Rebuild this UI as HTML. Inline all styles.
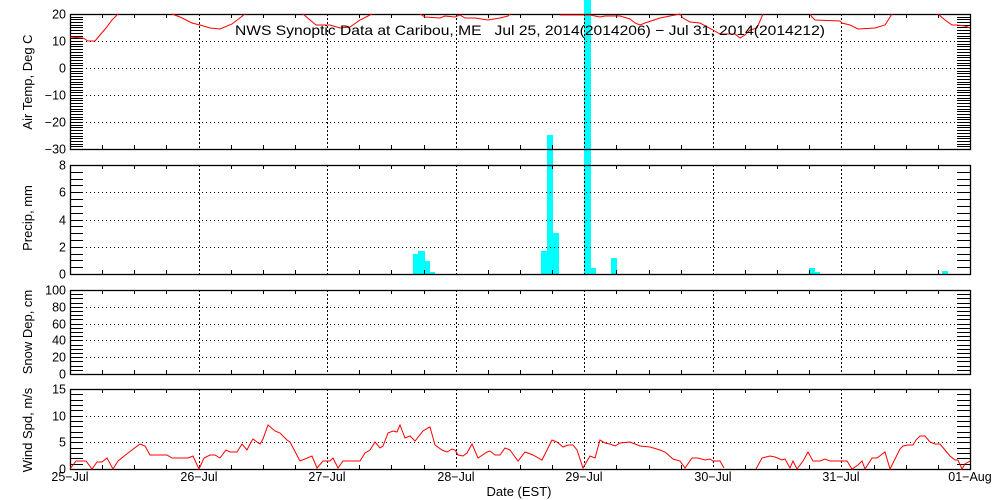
<!DOCTYPE html>
<html><head><meta charset="utf-8"><style>
html,body{margin:0;padding:0;background:#fff;}
svg{display:block;font-family:"Liberation Sans",sans-serif;}
</style></head><body>
<svg id="s" width="1000" height="500" viewBox="0 0 1000 500" xmlns="http://www.w3.org/2000/svg">
<rect width="1000" height="500" fill="#fff"/>
<g id="bars" fill="#00ffff">
<rect x="413" y="254" width="5" height="20"/>
<rect x="418" y="251" width="7" height="23"/>
<rect x="425" y="261" width="5" height="13"/>
<rect x="430" y="272" width="5" height="2"/>
<rect x="541" y="251" width="6" height="23"/>
<rect x="547" y="135" width="6" height="139"/>
<rect x="553" y="233" width="6" height="41"/>
<rect x="584" y="0" width="7" height="274"/>
<rect x="591" y="268" width="5" height="6"/>
<rect x="611" y="258" width="6" height="16"/>
<rect x="809" y="268" width="6" height="6"/>
<rect x="815" y="272" width="5" height="2"/>
<rect x="942" y="271" width="6" height="3"/>
</g>
<g id="g"></g>
<text x="235" y="35" font-size="14" fill="#000" style="white-space:pre" xml:space="preserve" textLength="590" lengthAdjust="spacingAndGlyphs">NWS Synoptic Data at Caribou, ME&#160;&#160;&#160;Jul 25, 2014(2014206) &#8722; Jul 31, 2014(2014212)</text>
<g font-size="13" fill="#000" text-anchor="middle">
<text transform="translate(32,82) rotate(-90)">Air Temp, Deg C</text>
<text transform="translate(32,218) rotate(-90)">Precip, mm</text>
<text transform="translate(32,332) rotate(-90)">Snow Dep, cm</text>
<text transform="translate(32,430) rotate(-90)">Wind Spd, m/s</text>
<text x="519" y="496">Date (EST)</text>
</g>
</svg>
<script>
var g=document.getElementById('g'),h='';
function L(x1,y1,x2,y2,ex){h+='<line x1="'+x1+'" y1="'+y1+'" x2="'+x2+'" y2="'+y2+'" stroke="#000" stroke-width="1" '+(ex||'')+'/>';}
function T(x,y,t,a){h+='<text x="'+x+'" y="'+y+'" font-size="12.5" text-anchor="'+(a||'end')+'">'+t+'</text>';}
var X0=70,X1=970,D=900/7;
var panels=[
 {t:14,b:149,min:-30,max:20,minor:1,major:10},
 {t:165,b:274,min:0,max:8,minor:0.5,major:2},
 {t:290,b:374,min:0,max:100,minor:5,major:20},
 {t:389,b:469,min:0,max:15,minor:1,major:5}
];
panels.forEach(function(p){
 var sc=(p.b-p.t)/(p.max-p.min);
 for(var v=p.min;v<=p.max+1e-6;v+=p.minor){
  var y=Math.round(p.b-(v-p.min)*sc)+0.5;
  L(X0,y,X0+13,y);L(X1-13,y,X1,y);
 }
 for(var v=p.min;v<=p.max+1e-6;v+=p.major){
  var y=Math.round(p.b-(v-p.min)*sc)+0.5;
  if(v>p.min&&v<p.max) L(X0,y,X1,y,'stroke-dasharray="1 3"');
  T(66,y+4,String(v).replace('-','\u2212'));
 }
 for(var i=1;i<28;i++){var x=Math.round(X0+i*D/4)+0.5;
  if(i%4==0) L(x,p.t,x,p.b,'stroke-dasharray="2 2"');
  else {L(x,p.t,x,p.t+4);L(x,p.b-4,x,p.b);}
 }
 h+='<rect x="70.5" y="'+(p.t+0.5)+'" width="900" height="'+(p.b-p.t)+'" fill="none" stroke="#000" stroke-width="1.3"/>';
});
var days=['25-Jul','26-Jul','27-Jul','28-Jul','29-Jul','30-Jul','31-Jul','01-Aug'];
days.forEach(function(d,i){T(Math.round(X0+i*D),481,d.replace('-','\u2212'),'middle');});
var temps=[
 [[70,37],[83,38],[88,41],[95,41],[100,35],[106,28],[112,20],[118,14]],
 [[172,14],[180,17],[192,23],[200,25],[210,28],[220,29],[232,24],[245,14]],
 [[303,14],[310,20],[316,25],[330,25],[340,28],[350,27],[360,20],[372,14]],
 [[420,14],[425,17],[440,18],[445,16],[455,17],[460,15],[465,18],[475,18],[488,20],[500,18],[508,16],[510,14]],
 [[560,15],[583,15],[590,15],[600,17],[605,16],[620,16],[630,19],[635,23],[640,25],[645,23],[660,18],[670,16],[680,14]],
 [[680,14],[683,18],[690,22],[700,23],[713,30],[720,34],[735,34],[740,38],[745,35],[750,30],[757,28],[763,14]],
 [[810,14],[812,17],[815,20],[840,21],[842,23],[850,25],[858,29],[875,28],[885,25],[892,14]],
 [[938,14],[945,20],[952,25],[957,25],[965,26],[970,28]]
];
temps.forEach(function(s){h+='<polyline fill="none" stroke="#f00" stroke-width="1" points="'+s.join(' ')+'"/>';});
var w=[[70,469],[76,461],[86,461],[92,469],[97,462],[102,462],[107,458],[113,469],[118,461],[128,453],[140,444],[145,446],[150,455],[167,455],[172,458],[188,458],[193,456],[199,469],[204,458],[210,455],[215,455],[220,458],[226,450],[230,452],[237,452],[242,444],[247,450],[250,444],[253,439],[257,442],[260,444],[263,439],[268,425],[275,431],[280,433],[287,440],[290,442],[300,461],[312,456],[317,468],[323,461],[330,461],[333,458],[338,468],[343,461],[360,461],[365,453],[370,450],[375,442],[380,448],[383,446],[388,433],[393,431],[397,432],[400,425],[405,438],[410,436],[415,441],[423,431],[428,428],[430,427],[435,445],[442,450],[447,452],[452,449],[455,450],[458,455],[463,456],[467,453],[472,444],[478,458],[487,452],[490,451],[495,455],[500,455],[505,448],[510,450],[518,461],[525,452],[533,455],[542,460],[547,450],[552,440],[557,442],[563,447],[568,445],[573,445],[577,450],[583,468],[590,456],[595,458],[600,440],[605,443],[610,444],[615,446],[620,443],[630,442],[635,444],[640,446],[650,447],[660,450],[665,452],[673,459],[680,461],[685,468],[692,458],[698,458],[705,460],[710,459],[713,461],[720,461],[724,468]];
var w2=[[756,469],[762,458],[770,456],[775,457],[782,460],[785,459],[790,468],[793,461],[797,469],[803,461],[808,452],[813,461],[820,461],[825,459],[830,461],[837,461],[847,461],[852,469],[858,465],[862,461],[865,469],[872,458],[877,458],[885,452],[890,469],[897,455],[900,449],[903,446],[908,445],[913,445],[916,440],[920,436],[925,436],[930,442],[935,444],[940,444],[945,450],[950,456],[955,460],[958,460],[962,469],[965,464],[970,461]];
[w,w2].forEach(function(s){h+='<polyline fill="none" stroke="#f00" stroke-width="1" points="'+s.join(' ')+'"/>';});
var tmp=new DOMParser().parseFromString('<svg xmlns="http://www.w3.org/2000/svg">'+h+'</svg>','image/svg+xml');
var kids=tmp.documentElement.childNodes;for(var i=0;i<kids.length;i++)g.appendChild(document.importNode(kids[i],true));
</script>
</body></html>
